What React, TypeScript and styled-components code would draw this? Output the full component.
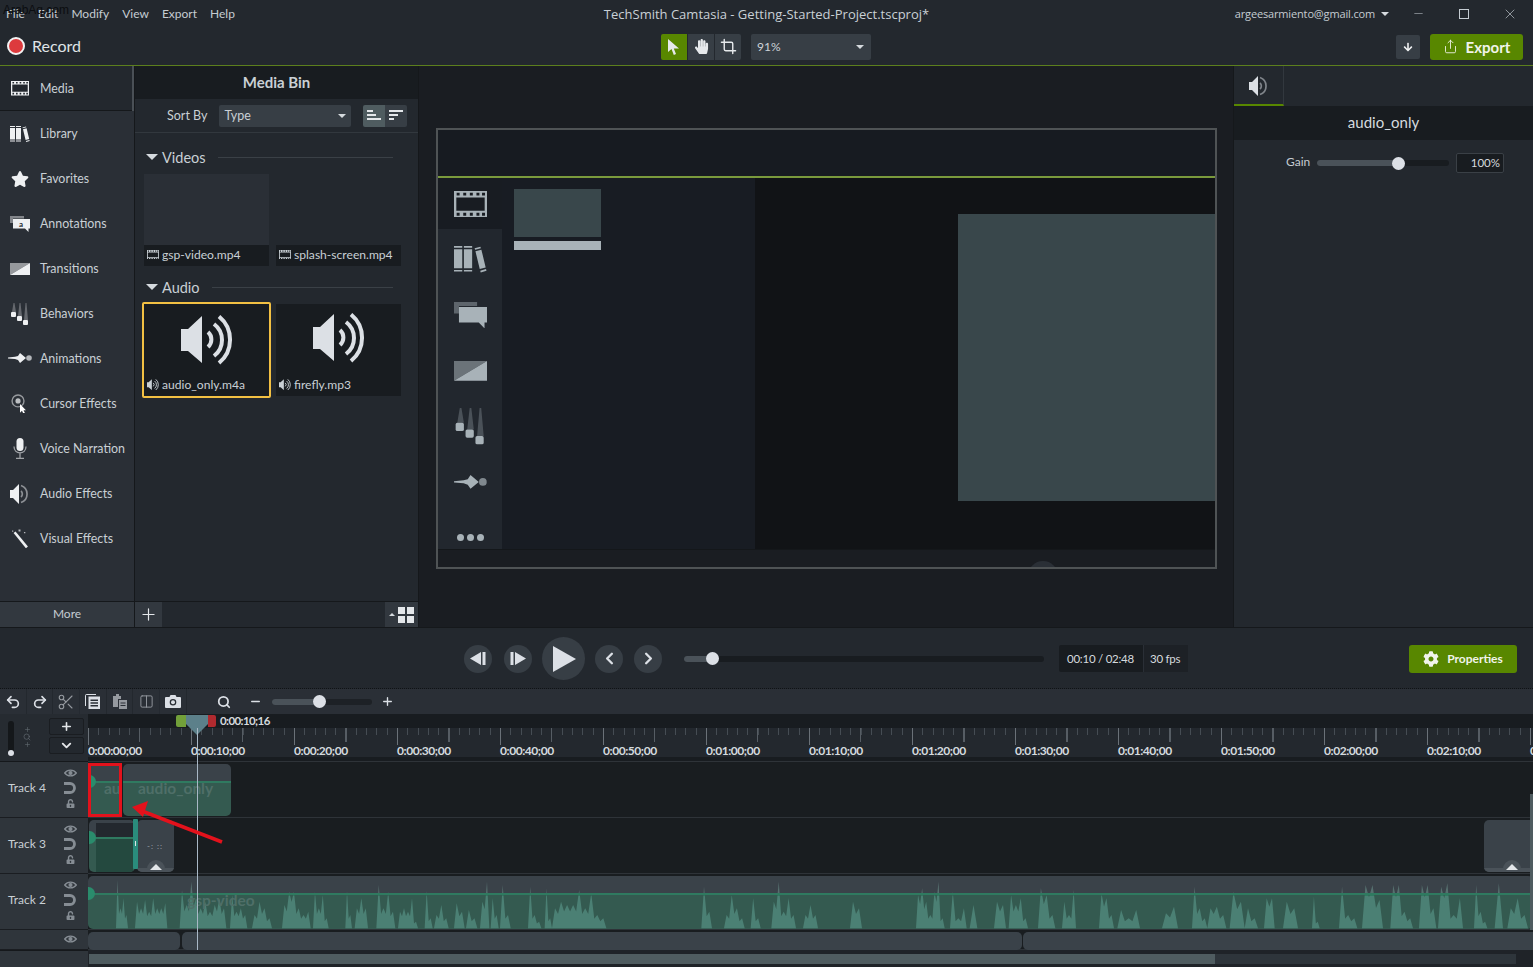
import styled, { createGlobalStyle } from "styled-components";
import {
  ChevronDown,
  ChevronLeft,
  ChevronRight,
  Columns2,
  Crop,
  Minus,
  Plus,
  Redo2,
  Scissors,
  Search,
  Share,
  Undo2,
  X,
} from "lucide-react";
import { FaArrowDown, FaCog, FaHandPaper, FaStar, FaUnlockAlt } from "react-icons/fa";

const GREEN = "#588700";
const INK = "#d5dade";

const GlobalStyle = createGlobalStyle`
  html, body { margin: 0; padding: 0; background: #23282e; }
  * { box-sizing: border-box; }
  body { font-family: Lato, "Open Sans", sans-serif; color: ${INK}; }
`;

/* ---------- icons ---------- */

type IconProps = { size?: number };

const FilmIcon = ({ size = 18 }: IconProps) => {
  const holes = [1.6, 5.6, 9.6, 13.6, 17];
  const d = holes
    .map((x) => `M${x} 1H${x + 1.8}V2.8H${x}Z M${x} 13.2H${x + 1.8}V15H${x}Z`)
    .join(" ");
  return (
    <svg width={size} height={size * 0.8} viewBox="0 0 20 16" fill="currentColor">
      <path fillRule="evenodd" d={`M0 0H20V16H0Z M1.4 4H18.6V12H1.4Z ${d}`} />
    </svg>
  );
};

const BooksIcon = ({ size = 20 }: IconProps) => (
  <svg width={size} height={size * 0.8} viewBox="0 0 20 16" fill="currentColor">
    <path d="M0 0H5V1H0Z M0 2H5V13.5H0Z M0 14.5H5V15.5H0Z" />
    <path d="M6 0H11V1H6Z M6 2H11V13.5H6Z M6 14.5H11V15.5H6Z" />
    <path d="M12.5 1.4L16 .4 16.3 1.3 12.8 2.3Z M13 3.2L16.6 2.2 19.2 13 15.6 14Z M15.9 15L19.4 14 19.7 15 16.2 16Z" />
  </svg>
);

const NoteIcon = ({ size = 20, blank = false }: IconProps & { blank?: boolean }) => (
  <svg width={size} height={size * 0.8} viewBox="0 0 20 16" fill="currentColor">
    <path opacity=".45" d="M0 0H14V2.5H3V7H0Z" />
    <path d="M3 3H20V12.5H18.5V16L15 12.5H3Z" />
    {!blank && (
      <text x="11" y="10.5" fontSize="8" fontFamily="Lato" fontWeight="700" textAnchor="middle" fill="#23282e">
        a
      </text>
    )}
  </svg>
);

const TransitionIcon = ({ size = 20 }: IconProps) => (
  <svg width={size} height={size * 0.6} viewBox="0 0 20 12" fill="currentColor">
    <path opacity=".55" d="M0 0H20L0 12Z" />
    <path d="M20 0V12H0Z" />
  </svg>
);

const BehaviorIcon = ({ size = 20 }: IconProps) => (
  <svg width={size} height={size * 1.1} viewBox="0 0 20 22" fill="currentColor">
    <path opacity=".3" d="M3.5 0H4.5L6 9H2Z M9.500 0H10.500L12 13H8Z M15.500 0H16.500L18 17H14Z" />
    <rect x="1" y="9" width="5" height="5" rx="1" />
    <rect x="7" y="13" width="5" height="5" rx="1" />
    <rect x="13" y="17" width="5" height="5" rx="1" />
  </svg>
);

const AnimationIcon = ({ size = 24 }: IconProps) => (
  <svg width={size} height={size * 0.42} viewBox="0 0 24 10" fill="currentColor">
    <path d="M0 4.500L7 3.800 10 3 12 0 18 5 12 10 10 7 7 6 0 5.500Z" />
    <circle cx="21" cy="5" r="2.800" opacity=".7" />
  </svg>
);

const CursorIcon = ({ size = 18 }: IconProps) => (
  <svg width={size} height={size * 1.1} viewBox="0 0 18 20" fill="none">
    <circle cx="7" cy="7" r="6" stroke="currentColor" strokeOpacity=".55" strokeWidth="1.400" />
    <circle cx="7" cy="7" r="2.600" fill="currentColor" opacity=".75" />
    <path d="M9 10V19L11 17 12.500 20 14 19.300 12.600 16.500H15Z" fill="#fff" />
  </svg>
);

const MicIcon = ({ size = 14 }: IconProps) => (
  <svg width={size} height={size * 1.5} viewBox="0 0 14 21" fill="none" stroke="currentColor">
    <rect x="3.500" y="0" width="7" height="13" rx="3.500" fill="currentColor" stroke="none" />
    <path opacity=".6" strokeWidth="1.300" d="M1 8.500C1 17 13 17 13 8.500M7 15.500V20M3 20.400H11" />
  </svg>
);

const WandIcon = ({ size = 18 }: IconProps) => (
  <svg width={size} height={size * 1.1} viewBox="0 0 18 20" fill="currentColor">
    <path d="M2.500 4L4.500 2.600 17 17.600 15 19.500Z" />
    <path opacity=".7" d="M7.500 .5h2v2h-2Z M13 3h1.400v1.400H13Z M1 1.500h1.200v1.200H1Z" />
  </svg>
);

const SpeakerIcon = ({ size = 52 }: IconProps) => (
  <svg width={size} height={(size * 50) / 52} viewBox="0 0 52 50" fill="none">
    <path fill="currentColor" d="M0 14H7L21 1V48L7 36H0Z" />
    <g stroke="currentColor" strokeWidth="4">
      <path d="M27 17A10 10 0 0 1 27 32" />
      <path d="M33 9A20 20 0 0 1 33 41" />
      <path d="M38 1.500A30 30 0 0 1 38 48" />
    </g>
  </svg>
);

// cone with two faint arcs, used for the audio effects rail item and tab
const AudioFxIcon = ({ size = 20 }: IconProps) => (
  <svg width={size} height={size} viewBox="0 0 20 20" fill="none">
    <path fill="currentColor" d="M0 6H3L9 0V20L3 14H0Z" />
    <g stroke="currentColor" strokeOpacity=".5" strokeWidth="1.700">
      <path d="M11 7A4 4 0 0 1 11 13" />
      <path d="M11 1.500A9 9 0 0 1 11 18.500" />
    </g>
  </svg>
);

const PointerIcon = () => (
  <svg width="12" height="16" viewBox="0 0 12 16" fill="currentColor">
    <path d="M0 0V13L3.500 10 5.800 16 8 15 5.800 9.500H11Z" />
  </svg>
);

const MagnetIcon = () => (
  <svg width="12" height="12" viewBox="0 0 12 12" fill="none" stroke="currentColor" strokeWidth="2.800">
    <path d="M0 1.500H6A4.500 4.500 0 0 1 6 10.500H0" />
  </svg>
);

const EyeIcon = () => (
  <svg width="13" height="8" viewBox="0 0 13 8" fill="none" stroke="currentColor" strokeWidth="1.300">
    <path d="M.7 4C3.500 .2 9.500 .2 12.300 4 9.500 7.800 3.500 7.800 .7 4Z" />
    <circle cx="6.500" cy="4" r="1.400" fill="currentColor" />
  </svg>
);

const PasteIcon = () => (
  <svg width="14" height="15" viewBox="0 0 14 15" fill="currentColor" opacity=".6">
    <path d="M3 0H6V2H8V5H5V13H0V2H3Z" />
    <path fillRule="evenodd" d="M6 6H14V15H6Z M7.500 8.500V9.500H12.500V8.500Z M7.500 11V12H12.500V11Z" />
  </svg>
);

const CopyIcon = () => (
  <svg width="15" height="15" viewBox="0 0 15 15" fill="currentColor">
    <path d="M2 0H11V1H1V12H0V2Q0 0 2 0Z" />
    <path fillRule="evenodd" d="M3.500 2.500H15V15H3.500Z M5.500 5.500V7H13V5.500Z M5.500 8.300V9.800H13V8.300Z M5.500 11V12.500H13V11Z" />
  </svg>
);

const CameraIcon = () => (
  <svg width="16" height="13" viewBox="0 0 16 13" fill="currentColor">
    <path
      fillRule="evenodd"
      d="M1 2H4.500L5.500 0H10.500L11.500 2H15Q16 2 16 3V12Q16 13 15 13H1Q0 13 0 12V3Q0 2 1 2Z M8 4A3.300 3.300 0 1 0 8 10.600 3.300 3.300 0 1 0 8 4Z"
    />
    <circle cx="8" cy="7.300" r="2" />
  </svg>
);

/* ---------- top bars ---------- */

const Frame = styled.div`
  position: relative;
  display: flex;
  flex-direction: column;
  width: 1533px;
  height: 967px;
  overflow: hidden;
  background: #23282e;
`;

const Watermark = styled.span`
  position: absolute;
  left: 3px;
  top: 3px;
  font: 12px "Liberation Sans", sans-serif;
  color: #0b0d10;
`;

const MenuBar = styled.header`
  display: grid;
  grid-template-columns: 1fr auto 1fr;
  align-items: center;
  height: 27px;
`;

const MenuList = styled.nav`
  display: flex;
  gap: 13px;
  padding-left: 6px;
  font-size: 12px;
  color: #c5ccd2;
`;

const WindowTitle = styled.div`
  font: 13px "Open Sans", sans-serif;
  color: #c9d0d6;
`;

const AccountArea = styled.div`
  display: flex;
  justify-content: flex-end;
  align-items: center;
  font: 11px "Open Sans", sans-serif;
  letter-spacing: -0.15px;
  color: #c5ccd2;
`;

const Caret = styled.i<{ $w?: number; $color?: string }>`
  display: inline-block;
  width: 0;
  height: 0;
  border-left: ${(p) => p.$w ?? 4}px solid transparent;
  border-right: ${(p) => p.$w ?? 4}px solid transparent;
  border-top: ${(p) => p.$w ?? 4}px solid ${(p) => p.$color ?? "#d5dade"};
`;

const AccountCaret = styled(Caret)`
  margin: 0 6px;
`;

const WinButton = styled.span`
  display: flex;
  width: 46px;
  justify-content: center;
  align-items: center;
  color: #c5ccd2;
`;

const WinMax = styled.i`
  width: 10px;
  height: 10px;
  border: 1px solid #c5ccd2;
`;

const MainBar = styled.div`
  display: grid;
  grid-template-columns: 1fr auto 1fr;
  align-items: center;
  height: 39px;
  padding: 1px 10px 0;
  border-bottom: 1px solid #5c7f1d;
`;

const RecordButton = styled.div`
  display: flex;
  align-items: center;
  gap: 7px;
  margin: -2px 0 0 -3px;
  font-size: 16px;
  color: #dfe3e6;
`;

const RecordDot = styled.i`
  width: 18px;
  height: 18px;
  border-radius: 50%;
  background: #dd3a3d;
  border: 2px solid #f2f2f2;
`;

const CenterTools = styled.div`
  display: flex;
  gap: 10px;
  margin-left: -1px;
`;

const ToolGroup = styled.div`
  display: flex;
  gap: 1px;
  height: 26px;
  border-radius: 2px;
  overflow: hidden;
`;

const ToolButton = styled.span<{ $active?: boolean }>`
  display: flex;
  width: 26px;
  align-items: center;
  justify-content: center;
  background: ${(p) => (p.$active ? GREEN : "#373e45")};
  color: #e6e9ec;
`;

const ZoomSelect = styled.div`
  display: flex;
  width: 120px;
  height: 26px;
  align-items: center;
  justify-content: space-between;
  padding: 0 7px 0 6px;
  background: #373e45;
  border-radius: 2px;
  font-size: 12px;
  color: #cdd3d8;
`;

const RightTools = styled.div`
  display: flex;
  justify-content: flex-end;
  align-items: center;
  gap: 10px;
`;

const SquareButton = styled.span`
  display: flex;
  width: 24px;
  height: 24px;
  align-items: center;
  justify-content: center;
  background: #373e45;
  border-radius: 2px;
  color: #f1f3f4;
  font-size: 10px;
`;

const GreenButton = styled.div<{ $w: number; $h: number; $fs: number }>`
  display: flex;
  width: ${(p) => p.$w}px;
  height: ${(p) => p.$h}px;
  align-items: center;
  justify-content: center;
  gap: 8px;
  background: ${GREEN};
  border-radius: 3px;
  color: #f1f4ea;
  font-size: ${(p) => p.$fs}px;
  font-weight: 700;
`;

/* ---------- workspace ---------- */

const Workspace = styled.main`
  display: flex;
  height: 561px;
`;

const Rail = styled.aside`
  display: flex;
  flex-direction: column;
  width: 135px;
  background: #2a2f36;
  border-right: 1px solid #15181b;
`;

const RailItem = styled.div<{ $active?: boolean }>`
  display: grid;
  grid-template-columns: 40px 1fr;
  align-items: center;
  height: 45px;
  font-size: 12.400px;
  color: #c9d0d5;
  background: ${(p) => (p.$active ? "#23282e" : "transparent")};
  box-shadow: ${(p) => (p.$active ? "inset -2px 0 0 #4a5056, inset 0 -1px 0 #15181b" : "none")};
`;

const RailGlyph = styled.span`
  display: flex;
  justify-content: center;
  padding-right: 1px;
  color: #eef0f2;
`;

const MoreButton = styled.div`
  margin-top: auto;
  height: 26px;
  line-height: 24px;
  text-align: center;
  font-size: 12px;
  color: #c5ccd2;
  background: #32383f;
  border-top: 1px solid #15181b;
`;

const BinPanel = styled.section`
  display: flex;
  flex-direction: column;
  width: 284px;
  border-right: 1px solid #15181b;
`;

const BinTitle = styled.h2`
  margin: 0;
  height: 33px;
  line-height: 33px;
  text-align: center;
  font-size: 15px;
  font-weight: 700;
  color: #c9d0d5;
  background: #181c20;
`;

const SortRow = styled.div`
  display: flex;
  align-items: center;
  height: 34px;
  padding: 0 11px 0 32px;
  font-size: 12.500px;
  color: #c9d0d5;
  border-bottom: 1px solid #32383e;
`;

const SortSelect = styled.div`
  display: flex;
  width: 132px;
  height: 22px;
  margin-left: 12px;
  align-items: center;
  justify-content: space-between;
  padding: 0 5px;
  background: #373e45;
  border-radius: 2px;
`;

const ToggleGroup = styled.div`
  display: flex;
  margin-left: auto;
  border-radius: 2px;
  overflow: hidden;
`;

const Toggle = styled.span<{ $on?: boolean }>`
  display: flex;
  flex-direction: column;
  gap: 2px;
  width: 22px;
  height: 22px;
  padding: 5px 4px;
  align-items: flex-start;
  background: ${(p) => (p.$on ? "#4f5c60" : "#373e45")};
`;

const ToggleBar = styled.i<{ $w: number }>`
  display: block;
  width: ${(p) => p.$w}px;
  height: 2px;
  background: #e4e7ea;
`;

const BinBody = styled.div`
  flex: 1;
  padding: 0 16px 0 9px;
`;

const GroupHead = styled.div<{ $top: number }>`
  display: flex;
  align-items: center;
  height: 20px;
  margin-top: ${(p) => p.$top}px;
  padding: 0 9px 0 2px;
  font-size: 14.500px;
  color: #c9d0d5;
  &::after {
    content: "";
    flex: 1;
    height: 1px;
    margin-left: 12px;
    background: #3a4046;
  }
`;

const GroupCaret = styled(Caret)`
  margin-right: 4px;
`;

const ThumbRow = styled.div<{ $top: number }>`
  display: flex;
  gap: 7px;
  margin-top: ${(p) => p.$top}px;
`;

const VideoThumb = styled.div<{ $filled?: boolean }>`
  display: flex;
  flex-direction: column;
  justify-content: flex-end;
  width: 125px;
  height: 92px;
  background: ${(p) => (p.$filled ? "#2a2f36" : "transparent")};
`;

const AudioThumb = styled.div<{ $selected?: boolean }>`
  display: flex;
  flex-direction: column;
  align-items: center;
  justify-content: space-between;
  flex: none;
  width: ${(p) => (p.$selected ? 129 : 125)}px;
  height: ${(p) => (p.$selected ? 96 : 92)}px;
  margin: ${(p) => (p.$selected ? "0 -2px 0 -2px" : "2px 0 0 0")};
  padding-top: ${(p) => (p.$selected ? 11 : 9)}px;
  background: #181c20;
  color: #dce0e5;
  border: ${(p) => (p.$selected ? "2px solid #f2c043" : "none")};
  border-radius: ${(p) => (p.$selected ? 2 : 0)}px;
`;

const ThumbName = styled.div`
  display: flex;
  align-items: center;
  align-self: stretch;
  gap: 3px;
  height: 21px;
  padding: 0 0 2px 3px;
  background: #181c20;
  font-size: 12.100px;
  color: #c9d0d5;
`;

const BinFooter = styled.div`
  display: flex;
  justify-content: space-between;
  height: 26px;
  border-top: 1px solid #15181b;
`;

const FooterButton = styled.span`
  display: flex;
  min-width: 25px;
  padding: 0 4px;
  gap: 3px;
  align-items: center;
  justify-content: center;
  background: #32383f;
  color: #e4e7ea;
`;

const UpCaret = styled(Caret)`
  transform: rotate(180deg);
`;

const GridGlyph = styled.span`
  display: grid;
  grid-template-columns: 7px 7px;
  gap: 2px;
  i {
    height: 7px;
    background: #e4e7ea;
  }
`;

/* ---------- canvas ---------- */

const Canvas = styled.section`
  display: flex;
  flex: 1;
  justify-content: center;
  padding: 62px 0 0 1px;
  background: #1a1d22;
`;

const Stage = styled.div`
  display: flex;
  flex-direction: column;
  width: 781px;
  height: 441px;
  border: 2px solid #4f5355;
  background: #171b21;
`;

const StageHeader = styled.div`
  flex: none;
  height: 48px;
  border-bottom: 2px solid #7a9a3c;
`;

const StageBody = styled.div`
  display: flex;
  flex: 1;
  min-height: 0;
`;

const MiniRail = styled.div`
  width: 64px;
  display: flex;
  flex-direction: column;
  overflow: hidden;
  background: #22272e;
`;

const MiniItem = styled.span<{ $active?: boolean }>`
  display: flex;
  flex: none;
  height: 55.700px;
  align-items: center;
  justify-content: center;
  padding-bottom: 4px;
  color: #a8b2b8;
  background: ${(p) => (p.$active ? "linear-gradient(#181c22 0 51px, transparent 51px)" : "transparent")};
`;

const Dots = styled.span`
  display: flex;
  gap: 3px;
  i {
    width: 7px;
    height: 7px;
    border-radius: 50%;
    background: #a8b2b8;
  }
`;

const MiniBin = styled.div`
  width: 253px;
  padding: 11px 12px;
  background: #181c23;
`;

const MiniThumb = styled.div`
  width: 87px;
  height: 48px;
  background: #39474b;
`;

const MiniLabel = styled.div`
  width: 87px;
  height: 9px;
  margin-top: 4px;
  background: #a8b2b8;
`;

const MiniStage = styled.div`
  display: flex;
  flex: 1;
  justify-content: flex-end;
  align-items: flex-start;
  padding-top: 36px;
  background: #111316;
`;

const MiniScreen = styled.div`
  width: 257px;
  height: 287px;
  background: #39474b;
`;

const StageFooter = styled.div`
  position: relative;
  flex: none;
  height: 18px;
  background: #1a1d22;
  overflow: hidden;
  border-top: 1px solid #14171a;
  &::after {
    content: "";
    position: absolute;
    left: 590px;
    top: 11px;
    width: 30px;
    height: 30px;
    border-radius: 50%;
    background: #2a2f36;
  }
`;

/* ---------- properties ---------- */

const PropsPanel = styled.aside`
  display: flex;
  flex-direction: column;
  width: 300px;
  border-left: 1px solid #15181b;
`;

const PropsTab = styled.div`
  display: flex;
  width: 50px;
  height: 40px;
  padding: 2px 0 0 1px;
  align-items: center;
  justify-content: center;
  color: #dce0e5;
  border-right: 1px solid #32383e;
  border-bottom: 2px solid ${GREEN};
`;

const PropsTitle = styled.div`
  height: 34px;
  line-height: 32px;
  text-align: center;
  font-size: 15px;
  color: #d5dade;
  background: #181c20;
`;

const GainRow = styled.div`
  display: flex;
  align-items: center;
  height: 20px;
  margin-top: 13px;
  padding-left: 52px;
  font-size: 12px;
  color: #c5ccd2;
`;

const GainLabel = styled.span`
  width: 31px;
  padding-bottom: 3px;
`;

const Track = styled.div<{ $w: number; $h?: number }>`
  position: relative;
  flex: none;
  width: ${(p) => p.$w}px;
  height: ${(p) => p.$h ?? 6}px;
  border-radius: 3px;
  background: #181c20;
`;

const TrackFill = styled.div`
  height: 100%;
  border-radius: 3px;
  background: #4a5259;
`;

const TrackThumb = styled.i`
  position: absolute;
  top: 50%;
  width: 13px;
  height: 13px;
  margin: -6.500px 0 0 -6.500px;
  border-radius: 50%;
  background: #dce0e6;
`;

const GainValue = styled.div`
  width: 48px;
  height: 20px;
  margin-left: 7px;
  padding-right: 3px;
  line-height: 17px;
  text-align: right;
  font-size: 11.500px;
  color: #d5dade;
  background: #181c20;
  border: 1px solid #3a4046;
  border-radius: 2px;
`;

/* ---------- player ---------- */

const PlayerBar = styled.div`
  display: flex;
  align-items: center;
  height: 62px;
  padding: 1px 16px 0 464px;
  border-top: 1px solid #15181b;
  border-bottom: 1px dotted #0f1215;
`;

const RoundButton = styled.span<{ $size: number; $gap: number }>`
  display: flex;
  flex: none;
  width: ${(p) => p.$size}px;
  height: ${(p) => p.$size}px;
  margin-right: ${(p) => p.$gap}px;
  align-items: center;
  justify-content: center;
  border-radius: 50%;
  background: #373e45;
  color: #dce0e6;
`;

const TimeBox = styled.div`
  display: flex;
  height: 27px;
  margin-left: 15px;
  align-items: center;
  background: #181c20;
  border-radius: 2px;
  font-size: 11.500px;
  letter-spacing: -0.25px;
  color: #d5dade;
`;

const TimeValue = styled.span`
  width: 84px;
  padding-left: 8px;
`;

const FpsValue = styled.span`
  width: 45px;
  height: 100%;
  line-height: 27px;
  padding-left: 6px;
  border-left: 1px solid #2a2f36;
  background: #1d2126;
`;

const PropertiesSlot = styled.div`
  margin-left: auto;
`;

/* ---------- timeline ---------- */

const TimelineBar = styled.div`
  display: flex;
  align-items: center;
  height: 25px;
  background: #2a2f36;
  color: #dce0e6;
`;

const TlButton = styled.span<{ $dim?: boolean }>`
  display: flex;
  width: 26.700px;
  height: 100%;
  align-items: center;
  justify-content: center;
  border-right: 1px solid #23282e;
  opacity: ${(p) => (p.$dim ? 0.6 : 1)};
`;

const TlZoom = styled.div`
  display: flex;
  align-items: center;
  margin-left: 30px;
`;

const TlSearch = styled.span`
  display: flex;
  margin-right: 18px;
`;

const TlSlider = styled(Track)`
  margin: 0 9px 0 10px;
  background: #1d2126;
`;

const TimelineGrid = styled.div`
  position: relative;
  display: grid;
  flex: 1;
  grid-template-columns: 88px 1fr;
  min-height: 0;
`;

const HeadColumn = styled.div`
  display: flex;
  flex-direction: column;
  background: #2f353b;
`;

const ZoomHead = styled.div`
  display: flex;
  height: 48px;
  padding: 4px 4px 0 8px;
  background: #262b31;
  border-bottom: 1px solid #15181b;
`;

const VerticalZoom = styled.div`
  position: relative;
  width: 6px;
  height: 33px;
  margin-top: 3px;
  border-radius: 3px;
  background: #14171a;
  &::after {
    content: "";
    position: absolute;
    left: 0;
    bottom: -2px;
    width: 6px;
    height: 6px;
    border-radius: 50%;
    background: #dce0e6;
  }
`;

const ZoomMarks = styled.div`
  display: flex;
  flex-direction: column;
  align-items: center;
  width: 20px;
  padding: 8px 0 0 0;
  margin-left: 3px;
  color: #626a71;
`;

const HeadButtons = styled.div`
  display: flex;
  flex-direction: column;
  gap: 2px;
  margin-left: auto;
`;

const HeadButton = styled.span`
  display: flex;
  width: 35px;
  height: 17px;
  align-items: center;
  justify-content: center;
  background: #23282e;
  border: 1px solid #1a1d21;
  border-radius: 2px;
  color: #e4e7ea;
`;

const TrackHead = styled.div<{ $h: number }>`
  display: grid;
  grid-template-columns: 1fr 20px;
  align-items: center;
  height: ${(p) => p.$h}px;
  padding: 0 8px 0 8px;
  border-bottom: 1px solid #1a1d21;
  font-size: 12px;
  color: #c9d0d5;
`;

const TrackName = styled.span`
  padding-bottom: 4px;
`;

const TrackIcons = styled.span`
  display: flex;
  flex-direction: column;
  align-items: center;
  gap: 5px;
  padding-bottom: 2px;
  color: #868d94;
`;

const ScrollCorner = styled.div`
  flex: 1;
  border-top: 1px solid #15181b;
`;

const TrackArea = styled.div`
  position: relative;
  display: flex;
  flex-direction: column;
  min-width: 0;
  overflow: hidden;
  background: #191d20;
`;

const Ruler = styled.div`
  position: relative;
  flex: none;
  height: 48px;
  padding-top: 14px;
  background: #181c20;
  border-bottom: 1px solid #2e3338;
`;

const Ticks = styled.div`
  height: 29px;
  background-color: #23282e;
  background-repeat: no-repeat;
  background-image: repeating-linear-gradient(90deg, #6a7178 0 1px, transparent 1px 103px),
    repeating-linear-gradient(90deg, #565d64 0 1px, transparent 1px 51.500px),
    repeating-linear-gradient(90deg, #454c53 0 1px, transparent 1px 10.300px);
  background-size: 100% 17px, 100% 14px, 100% 7px;
`;

const RulerLabels = styled.div`
  position: absolute;
  left: 0;
  bottom: 3px;
  display: flex;
  width: 1500px;
  font-size: 12px;
  font-weight: 700;
  letter-spacing: -0.450px;
  color: #d5dade;
  white-space: nowrap;
`;

const RulerLabel = styled.span`
  flex: none;
  width: 103px;
`;

const Lane = styled.div<{ $h: number }>`
  position: relative;
  flex: none;
  height: ${(p) => p.$h}px;
  border-bottom: 1px solid #2e3338;
`;

const Clip = styled.div<{ $left: number; $w: number; $top: number; $h: number; $gray?: boolean }>`
  position: absolute;
  left: ${(p) => p.$left}px;
  top: ${(p) => p.$top}px;
  width: ${(p) => p.$w}px;
  height: ${(p) => p.$h}px;
  border-radius: 5px;
  overflow: hidden;
  background: ${(p) =>
    p.$gray ? "#3a4249" : "linear-gradient(#3a4249 0 17px, #2f7a60 17px 19px, #345a50 19px)"};
`;

const ClipName = styled.span<{ $indent: number }>`
  position: absolute;
  left: ${(p) => p.$indent}px;
  top: 15px;
  font-size: 15.500px;
  font-weight: 700;
  white-space: nowrap;
  color: #4f6f68;
`;

const WaveSvg = styled.svg`
  position: absolute;
  left: 0;
  bottom: 0;
`;

const ClipDot = styled.i`
  position: absolute;
  left: -6px;
  top: 11px;
  width: 13px;
  height: 13px;
  border-radius: 50%;
  background: #2a8c6c;
`;

const InnerShot = styled.div`
  position: absolute;
  left: 7px;
  top: 3px;
  bottom: 0;
  width: 37px;
  background: linear-gradient(#23282e 0 14px, #2f7a60 14px 16px, #24493f 16px);
`;

const Handle = styled.i`
  position: absolute;
  left: 45px;
  top: 1px;
  width: 5px;
  height: 50px;
  background: #2a8c7c;
  border-radius: 1px;
  &::after {
    content: "";
    position: absolute;
    left: 2px;
    top: 22px;
    width: 1px;
    height: 5px;
    background: #dfe6e6;
  }
`;

const Bump = styled.span<{ $left?: number }>`
  position: absolute;
  left: ${(p) => (p.$left === undefined ? "50%" : `${p.$left}px`)};
  bottom: 0;
  width: 18px;
  height: 12px;
  margin-left: -9px;
  border-radius: 9px 9px 0 0;
  background: #4a5259;
  &::after {
    content: "";
    position: absolute;
    left: 3px;
    bottom: 2px;
    border-left: 6px solid transparent;
    border-right: 6px solid transparent;
    border-bottom: 6px solid #e4e7ea;
  }
`;

const ClipStrip = styled.span`
  position: absolute;
  left: 0;
  right: 0;
  bottom: 0;
  height: 4px;
  background: #4a5259;
`;

const ClipMarks = styled.span`
  position: absolute;
  left: 10px;
  top: 21px;
  font-size: 8px;
  letter-spacing: 1px;
  white-space: nowrap;
  color: #9aa3aa;
`;

const Playhead = styled.div`
  position: absolute;
  left: 108.500px;
  top: 14px;
  bottom: 17px;
  width: 1.500px;
  background: #a9b8c6;
`;

const PlayheadCap = styled.i`
  position: absolute;
  left: 98px;
  top: 1px;
  width: 22px;
  height: 20px;
  background: #5c808a;
  clip-path: polygon(0 0, 100% 0, 100% 45%, 50% 100%, 0 45%);
`;

const RangeStart = styled.i`
  position: absolute;
  left: 88px;
  top: 1px;
  width: 10px;
  height: 12px;
  background: #72a03a;
  border-radius: 2px 0 0 2px;
`;

const RangeEnd = styled.i`
  position: absolute;
  left: 120px;
  top: 1px;
  width: 8px;
  height: 12px;
  background: #b02a2f;
  border-radius: 0 2px 2px 0;
`;

const PlayheadTime = styled.span`
  position: absolute;
  left: 132px;
  top: 0;
  font-size: 11.500px;
  font-weight: 700;
  letter-spacing: -0.600px;
  color: #d5dade;
`;

const ScrollStrip = styled.div`
  flex: 1;
  padding: 4px 17px 3px 1px;
  background: #1f2328;
`;

const ScrollTrack = styled.div`
  height: 10px;
  background: #2e353b;
`;

const ScrollThumb = styled.div`
  width: 1126px;
  height: 100%;
  background: #4f5c60;
`;

const VScroll = styled.i`
  position: absolute;
  right: 0;
  top: 80px;
  width: 3px;
  height: 136px;
  background: #4f5c60;
`;

const RedBox = styled.div`
  position: absolute;
  left: 88px;
  top: 49px;
  width: 34px;
  height: 54px;
  border: 3px solid #e3121c;
`;

const RedArrow = styled.svg`
  position: absolute;
  left: 120px;
  top: 80px;
`;

/* ---------- data ---------- */

const railItems = [
  { label: "Media", icon: <FilmIcon /> },
  { label: "Library", icon: <BooksIcon /> },
  { label: "Favorites", icon: <FaStar size={18} /> },
  { label: "Annotations", icon: <NoteIcon /> },
  { label: "Transitions", icon: <TransitionIcon /> },
  { label: "Behaviors", icon: <BehaviorIcon /> },
  { label: "Animations", icon: <AnimationIcon /> },
  { label: "Cursor Effects", icon: <CursorIcon /> },
  { label: "Voice Narration", icon: <MicIcon /> },
  { label: "Audio Effects", icon: <AudioFxIcon /> },
  { label: "Visual Effects", icon: <WandIcon /> },
];

const rulerLabels = [
  "0:00:00;00", "0:00:10;00", "0:00:20;00", "0:00:30;00", "0:00:40;00",
  "0:00:50;00", "0:01:00;00", "0:01:10;00", "0:01:20;00", "0:01:30;00",
  "0:01:40;00", "0:01:50;00", "0:02:00;00", "0:02:10;00", "0:02:20;00",
];

// bursts of the waveform: start, end, then peak heights, in 1/3 px units
const bursts: [number, number, number[]][] = [
  [84, 120, [145, 60, 90, 40]], [141, 238, [80, 60, 85, 50, 90, 60, 60, 75]],
  [275, 415, [115, 70, 140, 90, 60, 80, 50, 70, 90, 60]], [426, 478, [100, 50, 60, 40]],
  [492, 552, [40, 80, 60, 30]], [582, 668, [70, 110, 110, 60, 40, 50]],
  [675, 722, [110, 60, 100, 30]], [772, 792, [112, 40]], [800, 840, [60, 90, 60]],
  [865, 922, [130, 60, 110, 50]], [930, 990, [50, 60, 50, 90, 20]], [1010, 1034, [112, 30]],
  [1038, 1082, [40, 70, 30]], [1098, 1130, [75, 50]], [1134, 1168, [55, 30]],
  [1176, 1204, [80, 140]], [1208, 1232, [90, 40]], [1236, 1268, [130, 40]],
  [1320, 1360, [125, 40, 20]], [1370, 1392, [120, 30]], [1392, 1555, [60, 80, 70, 70, 115, 60, 105, 40, 30]],
  [1840, 1872, [125, 50]], [1908, 1970, [40, 100, 60, 30]], [1988, 2018, [90, 30]],
  [2050, 2124, [80, 140, 50, 90, 40]], [2145, 2190, [40, 70, 40]], [2286, 2322, [80, 60]],
  [2484, 2570, [100, 120, 80, 40, 110, 140, 30]], [2586, 2636, [110, 30, 60]], [2645, 2668, [70]],
  [2718, 2754, [80, 70]], [2762, 2820, [100, 70, 90, 30]], [2850, 2902, [120, 100, 40]],
  [2922, 2964, [80, 40, 115]], [3033, 3078, [105, 90, 40]], [3088, 3156, [55, 30, 55]],
  [3222, 3270, [45, 65]], [3312, 3358, [125, 60, 30]], [3358, 3415, [60, 65, 40]],
  [3425, 3470, [110, 80]], [3470, 3510, [60, 30]], [3528, 3560, [90, 90]], [3585, 3630, [80, 60]],
  [3672, 3695, [95, 20]], [3753, 3808, [125, 40, 30]], [3822, 3885, [130, 130, 85]],
  [3907, 3975, [130, 130, 50, 30]], [3993, 4045, [130, 130, 60]], [4050, 4125, [125, 135, 40, 90]],
  [4158, 4198, [130, 50, 20]], [4220, 4245, [135]], [4258, 4320, [60, 90, 40]],
];

const wavePath = bursts
  .map(([a, b, peaks]) => {
    const step = (b - a) / peaks.length;
    const pts = peaks
      .map((h, i) => {
        const x = a + step * (i + 0.5);
        const next = peaks[i + 1];
        const valley = next ? `L${x + step / 2} ${157 - Math.min(h, next) * 0.72}` : "";
        return `L${x} ${157 - h}${valley}`;
      })
      .join("");
    return `M${a} 157${pts}L${b} 157Z`;
  })
  .join("");

const TrackControls = () => (
  <TrackIcons>
    <EyeIcon />
    <MagnetIcon />
    <FaUnlockAlt size={9} />
  </TrackIcons>
);

export default function App() {
  return (
    <Frame>
      <GlobalStyle />
      <MenuBar>
        <MenuList>
          {["File", "Edit", "Modify", "View", "Export", "Help"].map((m) => (
            <span key={m}>{m}</span>
          ))}
        </MenuList>
        <WindowTitle>TechSmith Camtasia - Getting-Started-Project.tscproj*</WindowTitle>
        <AccountArea>
          argeesarmiento@gmail.com
          <AccountCaret />
          <WinButton>
            <Minus size={13} strokeWidth={1} />
          </WinButton>
          <WinButton>
            <WinMax />
          </WinButton>
          <WinButton>
            <X size={16} strokeWidth={1} />
          </WinButton>
        </AccountArea>
      </MenuBar>
      <Watermark>ArabAq.com</Watermark>

      <MainBar>
        <RecordButton>
          <RecordDot />
          Record
        </RecordButton>
        <CenterTools>
          <ToolGroup>
            <ToolButton $active>
              <PointerIcon />
            </ToolButton>
            <ToolButton>
              <FaHandPaper size={15} />
            </ToolButton>
            <ToolButton>
              <Crop size={17} strokeWidth={2} />
            </ToolButton>
          </ToolGroup>
          <ZoomSelect>
            91%
            <Caret />
          </ZoomSelect>
        </CenterTools>
        <RightTools>
          <SquareButton>
            <FaArrowDown />
          </SquareButton>
          <GreenButton $w={93} $h={26} $fs={15}>
            <Share size={15} strokeWidth={1.4} />
            Export
          </GreenButton>
        </RightTools>
      </MainBar>

      <Workspace>
        <Rail>
          {railItems.map((item, i) => (
            <RailItem key={item.label} $active={i === 0}>
              <RailGlyph>{item.icon}</RailGlyph>
              {item.label}
            </RailItem>
          ))}
          <MoreButton>More</MoreButton>
        </Rail>

        <BinPanel>
          <BinTitle>Media Bin</BinTitle>
          <SortRow>
            Sort By
            <SortSelect>
              Type
              <Caret />
            </SortSelect>
            <ToggleGroup>
              <Toggle $on>
                <ToggleBar $w={6} />
                <ToggleBar $w={9} />
                <ToggleBar $w={14} />
              </Toggle>
              <Toggle>
                <ToggleBar $w={14} />
                <ToggleBar $w={9} />
                <ToggleBar $w={5} />
              </Toggle>
            </ToggleGroup>
          </SortRow>
          <BinBody>
            <GroupHead $top={14}>
              <GroupCaret $w={6} />
              Videos
            </GroupHead>
            <ThumbRow $top={7}>
              <VideoThumb $filled>
                <ThumbName>
                  <FilmIcon size={12} />
                  gsp-video.mp4
                </ThumbName>
              </VideoThumb>
              <VideoThumb>
                <ThumbName>
                  <FilmIcon size={12} />
                  splash-screen.mp4
                </ThumbName>
              </VideoThumb>
            </ThumbRow>
            <GroupHead $top={11}>
              <GroupCaret $w={6} />
              Audio
            </GroupHead>
            <ThumbRow $top={5}>
              <AudioThumb $selected>
                <SpeakerIcon />
                <ThumbName>
                  <SpeakerIcon size={12} />
                  audio_only.m4a
                </ThumbName>
              </AudioThumb>
              <AudioThumb>
                <SpeakerIcon />
                <ThumbName>
                  <SpeakerIcon size={12} />
                  firefly.mp3
                </ThumbName>
              </AudioThumb>
            </ThumbRow>
          </BinBody>
          <BinFooter>
            <FooterButton>
              <Plus size={19} strokeWidth={1.5} />
            </FooterButton>
            <FooterButton>
              <UpCaret $w={3} />
              <GridGlyph>
                <i />
                <i />
                <i />
                <i />
              </GridGlyph>
            </FooterButton>
          </BinFooter>
        </BinPanel>

        <Canvas>
          <Stage>
            <StageHeader />
            <StageBody>
              <MiniRail>
                <MiniItem $active>
                  <FilmIcon size={33} />
                </MiniItem>
                <MiniItem>
                  <BooksIcon size={33} />
                </MiniItem>
                <MiniItem>
                  <NoteIcon size={33} blank />
                </MiniItem>
                <MiniItem>
                  <TransitionIcon size={33} />
                </MiniItem>
                <MiniItem>
                  <BehaviorIcon size={33} />
                </MiniItem>
                <MiniItem>
                  <AnimationIcon size={33} />
                </MiniItem>
                <MiniItem>
                  <Dots>
                    <i />
                    <i />
                    <i />
                  </Dots>
                </MiniItem>
              </MiniRail>
              <MiniBin>
                <MiniThumb />
                <MiniLabel />
              </MiniBin>
              <MiniStage>
                <MiniScreen />
              </MiniStage>
            </StageBody>
            <StageFooter />
          </Stage>
        </Canvas>

        <PropsPanel>
          <PropsTab>
            <AudioFxIcon />
          </PropsTab>
          <PropsTitle>audio_only</PropsTitle>
          <GainRow>
            <GainLabel>Gain</GainLabel>
            <Track $w={132}>
              <TrackFill style={{ width: 81 }} />
              <TrackThumb style={{ left: 81 }} />
            </Track>
            <GainValue>100%</GainValue>
          </GainRow>
        </PropsPanel>
      </Workspace>

      <PlayerBar>
        <RoundButton $size={28} $gap={12}>
          <svg width="16" height="13" viewBox="0 0 16 13" fill="currentColor">
            <path d="M0 6.500L11 0V13Z M12.500 0H15.500V13H12.500Z" />
          </svg>
        </RoundButton>
        <RoundButton $size={28} $gap={10}>
          <svg width="16" height="13" viewBox="0 0 16 13" fill="currentColor">
            <path d="M.5 0H3.500V13H.5Z M5 0L16 6.500 5 13Z" />
          </svg>
        </RoundButton>
        <RoundButton $size={43} $gap={10}>
          <svg width="23" height="26" viewBox="0 0 23 26" fill="currentColor" style={{ marginLeft: 2 }}>
            <path d="M0 0L23 13 0 26Z" />
          </svg>
        </RoundButton>
        <RoundButton $size={28} $gap={11}>
          <ChevronLeft size={19} strokeWidth={3} />
        </RoundButton>
        <RoundButton $size={28} $gap={22}>
          <ChevronRight size={19} strokeWidth={3} />
        </RoundButton>
        <Track $w={360}>
          <TrackFill style={{ width: 28 }} />
          <TrackThumb style={{ left: 28 }} />
        </Track>
        <TimeBox>
          <TimeValue>00:10 / 02:48</TimeValue>
          <FpsValue>30 fps</FpsValue>
        </TimeBox>
        <PropertiesSlot>
          <GreenButton $w={108} $h={28} $fs={12}>
            <FaCog size={16} />
            Properties
          </GreenButton>
        </PropertiesSlot>
      </PlayerBar>

      <TimelineBar>
        <TlButton>
          <Undo2 size={16} strokeWidth={2.5} />
        </TlButton>
        <TlButton>
          <Redo2 size={16} strokeWidth={2.5} />
        </TlButton>
        <TlButton $dim>
          <Scissors size={18} strokeWidth={1.5} />
        </TlButton>
        <TlButton>
          <CopyIcon />
        </TlButton>
        <TlButton>
          <PasteIcon />
        </TlButton>
        <TlButton $dim>
          <Columns2 size={15} strokeWidth={1.5} />
        </TlButton>
        <TlButton>
          <CameraIcon />
        </TlButton>
        <TlZoom>
          <TlSearch>
            <Search size={14} strokeWidth={3} />
          </TlSearch>
          <Minus size={13} strokeWidth={2.5} />
          <TlSlider $w={100}>
            <TrackFill style={{ width: 48 }} />
            <TrackThumb style={{ left: 48 }} />
          </TlSlider>
          <Plus size={13} strokeWidth={2.5} />
        </TlZoom>
      </TimelineBar>

      <TimelineGrid>
        <HeadColumn>
          <ZoomHead>
            <VerticalZoom />
            <ZoomMarks>
              <Plus size={7} />
              <Search size={8} />
              <Plus size={7} />
            </ZoomMarks>
            <HeadButtons>
              <HeadButton>
                <Plus size={13} strokeWidth={3} />
              </HeadButton>
              <HeadButton>
                <ChevronDown size={15} strokeWidth={3} />
              </HeadButton>
            </HeadButtons>
          </ZoomHead>
          {["Track 4", "Track 3", "Track 2"].map((t) => (
            <TrackHead key={t} $h={56}>
              <TrackName>{t}</TrackName>
              <TrackControls />
            </TrackHead>
          ))}
          <TrackHead $h={20}>
            <span />
            <TrackIcons>
              <EyeIcon />
            </TrackIcons>
          </TrackHead>
          <ScrollCorner />
        </HeadColumn>

        <TrackArea>
          <Ruler>
            <Ticks />
            <RulerLabels>
              {rulerLabels.map((l) => (
                <RulerLabel key={l}>{l}</RulerLabel>
              ))}
            </RulerLabels>
          </Ruler>
          <Lane $h={56}>
            <Clip $left={1} $w={33} $top={2} $h={52}>
              <ClipDot />
              <ClipName $indent={15}>au</ClipName>
            </Clip>
            <Clip $left={35} $w={108} $top={2} $h={52}>
              <ClipName $indent={15}>audio_only</ClipName>
            </Clip>
          </Lane>
          <Lane $h={56}>
            <Clip $left={1} $w={46} $top={2} $h={52}>
              <InnerShot />
              <ClipDot />
            </Clip>
            <Clip $left={49} $w={37} $top={2} $h={52} $gray>
              <ClipMarks>-: ::</ClipMarks>
              <ClipStrip />
              <Bump />
            </Clip>
            <Handle />
            <Clip $left={1396} $w={60} $top={2} $h={52} $gray>
              <ClipStrip />
              <Bump $left={28} />
            </Clip>
          </Lane>
          <Lane $h={56}>
            <Clip $left={0} $w={1445} $top={2} $h={53}>
              <WaveSvg width="1445" height="53" viewBox="0 0 4335 159">
                <defs>
                  <linearGradient id="waveFill" gradientUnits="userSpaceOnUse" x1="0" y1="0" x2="0" y2="159">
                    <stop offset="0.33" stopColor="#56706f" />
                    <stop offset="0.33" stopColor="#2f7a60" />
                    <stop offset="0.37" stopColor="#2f7a60" />
                    <stop offset="0.37" stopColor="#4b8074" />
                  </linearGradient>
                </defs>
                <path d={wavePath} fill="url(#waveFill)" />
              </WaveSvg>
              <ClipDot />
              <ClipName $indent={99}>gsp-video</ClipName>
            </Clip>
          </Lane>
          <Lane $h={20}>
            <Clip $left={0} $w={92} $top={2} $h={18} $gray />
            <Clip $left={94} $w={840} $top={2} $h={18} $gray />
            <Clip $left={935} $w={520} $top={2} $h={18} $gray />
          </Lane>
          <ScrollStrip>
            <ScrollTrack>
              <ScrollThumb />
            </ScrollTrack>
          </ScrollStrip>
          <VScroll />
          <RangeStart />
          <RangeEnd />
          <PlayheadCap />
          <Playhead />
          <PlayheadTime>0:00:10;16</PlayheadTime>
        </TrackArea>

        <RedBox />
        <RedArrow width="110" height="50" viewBox="0 0 110 50">
          <path d="M102 48L22 17" stroke="#e3121c" strokeWidth="3.500" />
          <path d="M12 13L28 7 23 23Z" fill="#e3121c" />
        </RedArrow>
      </TimelineGrid>
    </Frame>
  );
}
